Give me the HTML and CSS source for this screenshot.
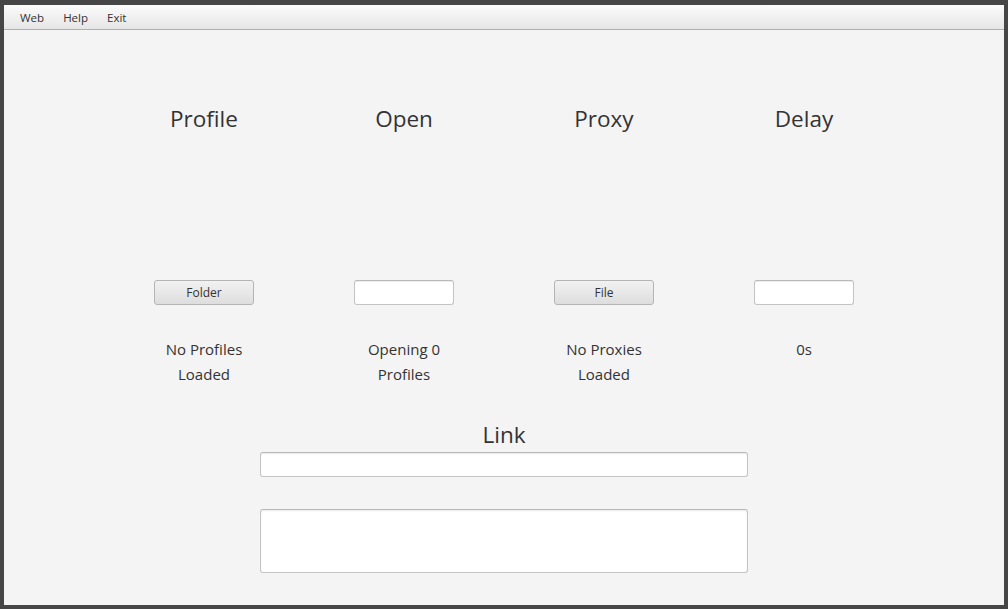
FILE: index.html
```html
<!DOCTYPE html>
<html lang="en">

<head>
    <meta charset="UTF-8">
    <meta name="viewport" content="width=device-width, initial-scale=1.0">
    <title>Profile Opener</title>
    <link rel="stylesheet" href="styles.css">
</head>

<body>
    <div class="window">
        <div class="menu-bar">
            <span class="menu">Web</span>
            <span class="menu">Help</span>
            <span class="menu">Exit</span>
        </div>

        <div class="main">
            <div class="columns">
                <div class="column">
                    <h2 class="title">Profile</h2>
                    <button class="button">Folder</button>
                    <p class="status">No Profiles<br>Loaded</p>
                </div>
                <div class="column">
                    <h2 class="title">Open</h2>
                    <input class="field" type="text">
                    <p class="status">Opening 0<br>Profiles</p>
                </div>
                <div class="column">
                    <h2 class="title">Proxy</h2>
                    <button class="button">File</button>
                    <p class="status">No Proxies<br>Loaded</p>
                </div>
                <div class="column">
                    <h2 class="title">Delay</h2>
                    <input class="field" type="text">
                    <p class="status">0s</p>
                </div>
            </div>

            <div class="link-box">
                <h2 class="title">Link</h2>
                <input class="field link-field" type="text">
                <textarea class="log"></textarea>
            </div>
        </div>
    </div>
</body>

</html>
```

FILE: styles.css
```css
* {
    padding: 0;
    margin: 0;
    box-sizing: border-box;
}

body {
    background: #464646;
    padding: 5px 4px 4px 4px;
    font-family: "Open Sans", "Noto Sans", sans-serif;
    color: #333333;
}

.window {
    height: 600px;
    background: #f4f4f4;
    display: flex;
    flex-direction: column;
}

.menu-bar {
    height: 25px;
    display: flex;
    align-items: center;
    padding-left: 9px;
    background: linear-gradient(#fbfbfb, #e6e6e6);
    border-bottom: 1px solid #b0b0b0;
}

.menu {
    font-size: 11.5px;
    padding: 0 7px;
    margin-right: 5px;
}

.main {
    padding-top: 73px;
    display: flex;
    flex-direction: column;
    align-items: center;
}

.columns {
    display: grid;
    grid-template-columns: repeat(4, 200px);
}

.column {
    display: flex;
    flex-direction: column;
    align-items: center;
}

.title {
    font-size: 22.5px;
    font-weight: normal;
    line-height: 32px;
    height: 32px;
}

.button {
    margin-top: 145px;
    width: 100px;
    height: 25px;
    font-family: inherit;
    font-size: 12px;
    color: #333333;
    background: linear-gradient(#f2f2f2, #dddddd);
    border: 1px solid #b4b4b4;
    border-radius: 3px;
}

.field {
    margin-top: 145px;
    width: 100px;
    height: 25px;
    background: #ffffff;
    border: 1px solid #c4c4c4;
    border-top-color: #b8b8b8;
    border-radius: 3px;
    box-shadow: inset 0 1px 1px #ececec;
}

.status {
    margin-top: 32px;
    font-size: 15px;
    line-height: 25px;
    text-align: center;
}

.link-box {
    margin-top: 32px;
    width: 488px;
    display: flex;
    flex-direction: column;
    align-items: center;
}

.link-field {
    margin-top: 1px;
    width: 488px;
}

.log {
    margin-top: 32px;
    width: 488px;
    height: 64px;
    resize: none;
    background: #ffffff;
    border: 1px solid #c4c4c4;
    border-top-color: #b8b8b8;
    border-radius: 3px;
    box-shadow: inset 0 1px 2px #ececec;
}
```
